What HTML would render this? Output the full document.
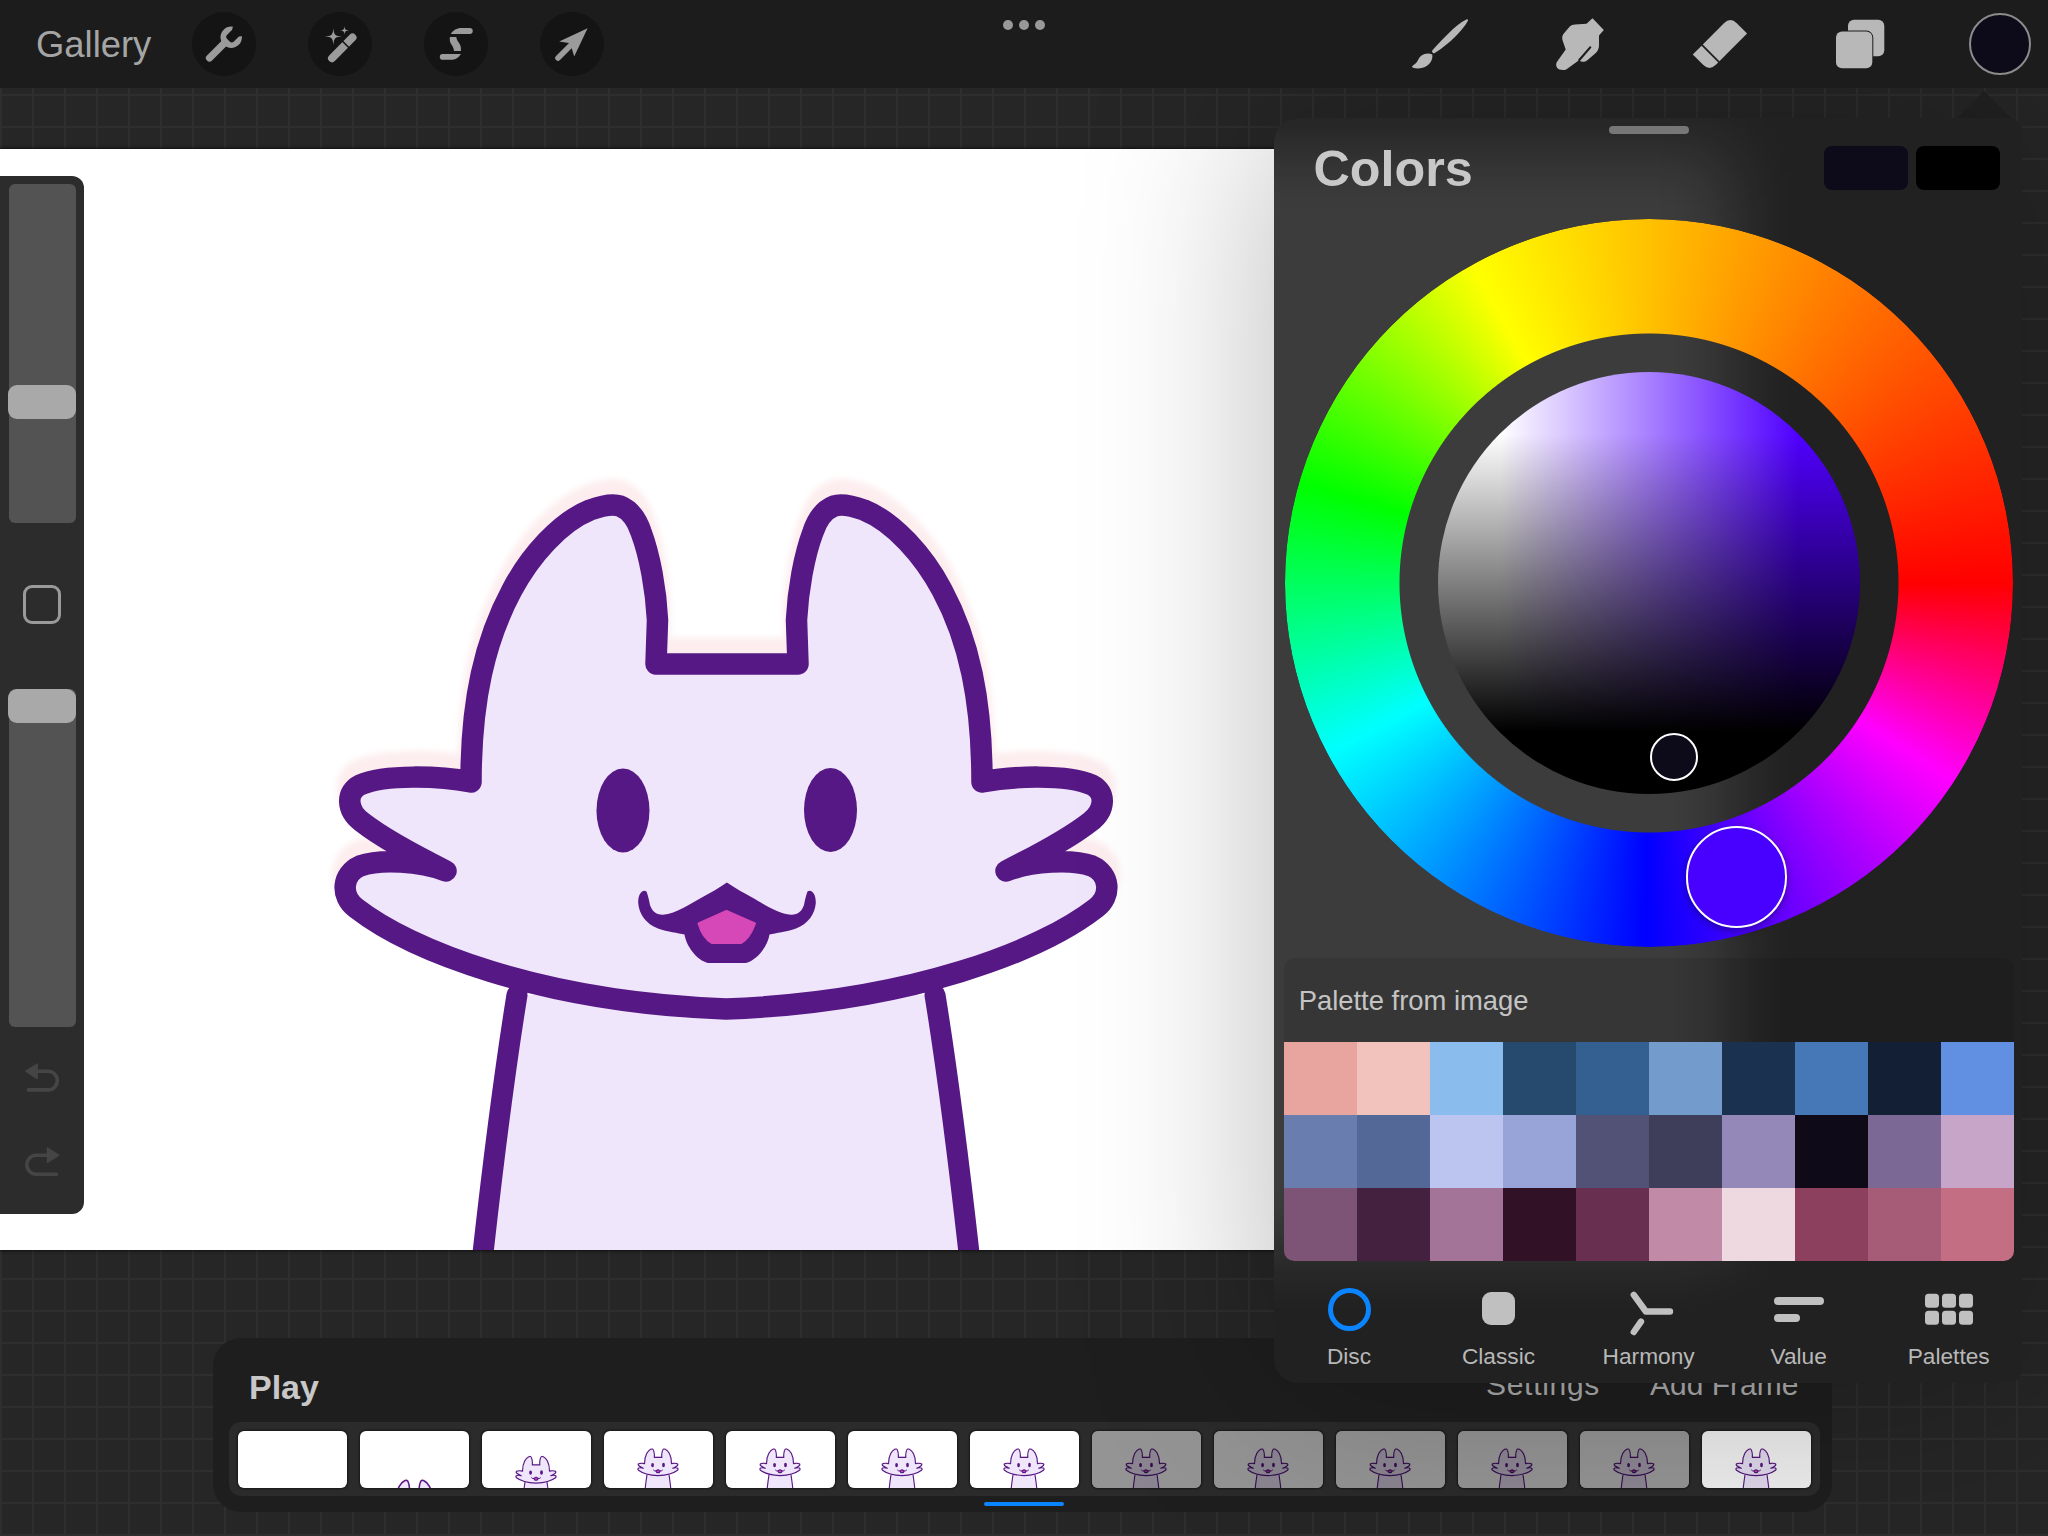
<!DOCTYPE html>
<html><head><meta charset="utf-8">
<style>
*{margin:0;padding:0;box-sizing:border-box}
html,body{width:2048px;height:1536px;overflow:hidden}
body{position:relative;background:#262626;font-family:"Liberation Sans",sans-serif;
background-image:linear-gradient(to right,#2e2e2e 0,#2e2e2e 2px,transparent 2px),linear-gradient(to bottom,#2e2e2e 0,#2e2e2e 2px,transparent 2px);
background-size:32px 32px,32px 32px;background-position:0 0,0 30px}
.abs{position:absolute}
#toolbar{left:0;top:0;width:2048px;height:88px;background:#1c1c1c;z-index:5}
.tbtn{position:absolute;top:12px;width:64px;height:64px;border-radius:50%;background:#141414}
.txt{position:absolute;white-space:nowrap;line-height:1}
#canvas{left:0;top:149px;width:1720px;height:1101px;background:#fff;box-shadow:0 0 3px 1px rgba(0,0,0,.6)}
#canvshade{left:1000px;top:149px;width:274px;height:1101px;background:linear-gradient(to right,rgba(0,0,0,0) 0,rgba(0,0,0,0) 80px,rgba(0,0,0,.05) 170px,rgba(0,0,0,.135) 274px)}
#sidebar{left:-20px;top:176px;width:104px;height:1038px;background:#2c2c2c;border-radius:12px}
#panel{left:1274px;top:118px;width:748px;height:1265px;border-radius:24px 14px 14px 24px;background:#212121;overflow:hidden;box-shadow:0 0 190px rgba(0,0,0,.28)}
#anim{left:213px;top:1338px;width:1619px;height:174px;border-radius:28px;background:rgba(29,29,29,.92)}
</style></head><body>

<div id="toolbar" class="abs">
  <div class="txt" style="left:36px;top:26.5px;font-size:36.4px;color:#a5a5a5">Gallery</div>
  <div class="tbtn" style="left:192px"><svg width="64" height="64">
    <line x1="17.5" y1="46" x2="33" y2="30.5" stroke="#9b9b9b" stroke-width="7.2" stroke-linecap="round"/>
    <circle cx="39.2" cy="25.3" r="10.7" fill="#9b9b9b"/>
    <g transform="translate(38.2,26.5) rotate(-45)" fill="#141414"><rect x="-2.5" y="-4.75" width="12" height="9.5" rx="3"/><circle cx="12" cy="0" r="6.6"/></g>
  </svg></div>
  <div class="tbtn" style="left:308px"><svg width="64" height="64">
    <line x1="24" y1="46.2" x2="44.5" y2="25.5" stroke="#9b9b9b" stroke-width="8" stroke-linecap="round"/>
    <line x1="34" y1="28.8" x2="41" y2="35.8" stroke="#141414" stroke-width="1.6"/>
    <path d="M25.4 15.899999999999999 C25.9 22.799999999999997 27.0 23.9 33.9 24.4 C27.0 24.9 25.9 26.0 25.4 32.9 C24.9 26.0 23.799999999999997 24.9 16.9 24.4 C23.799999999999997 23.9 24.9 22.799999999999997 25.4 15.899999999999999Z" fill="#9b9b9b"/>
    <path d="M36.5 14.3 C36.85 17.6 37.4 18.15 40.7 18.5 C37.4 18.85 36.85 19.4 36.5 22.7 C36.15 19.4 35.6 18.85 32.3 18.5 C35.6 18.15 36.15 17.6 36.5 14.3Z" fill="#9b9b9b"/>
  </svg></div>
  <div class="tbtn" style="left:424px"><svg width="64" height="64">
    <path d="M26.9 21.9 C29 18.3 33 16 37 16 L45.8 16 A2.95 2.95 0 0 1 45.8 21.9 Z" fill="#9b9b9b"/>
    <path d="M25.8 25 L32.3 25 C32.6 29.5 36.9 31.5 36.9 36 L36.9 39 L30 39 C30 34.5 25.8 32 25.8 28 Z" fill="#9b9b9b"/>
    <path d="M36.9 42.1 L18.6 42.1 A2.8 2.8 0 0 0 18.6 47.7 L28.3 47.7 C32 47.7 35 45.5 36.9 42.1 Z" fill="#9b9b9b"/>
  </svg></div>
  <div class="tbtn" style="left:540px"><svg width="64" height="64">
    <line x1="18" y1="46" x2="32" y2="32" stroke="#9b9b9b" stroke-width="5.6" stroke-linecap="round"/>
    <path d="M47.6 16.2 L19.2 29.4 L30.2 31.2 L34.2 44.6 Z" fill="#9b9b9b"/>
  </svg></div>
  <div class="abs" style="left:1003px;top:20px;width:10px;height:10px;border-radius:50%;background:#999"></div>
  <div class="abs" style="left:1019px;top:20px;width:10px;height:10px;border-radius:50%;background:#999"></div>
  <div class="abs" style="left:1035px;top:20px;width:10px;height:10px;border-radius:50%;background:#999"></div>
  <svg class="abs" style="left:1404px;top:12px" width="72" height="64">
    <path d="M28.4 38.2 C38.5 28 50.5 13.5 62.3 7.6 Q64.6 6.6 63.8 8.9 C58.5 18.5 46.5 30.5 30.8 41.1 Q29.2 41.8 28.3 40.3 Q27.8 39.2 28.4 38.2Z" fill="#b8b8b8"/>
    <path d="M28.3 42.6 C25 40.8 20.5 41.5 17.5 43.5 C14.5 45.7 14.2 49 11.8 51.3 C10.4 52.7 8.2 53.6 8 54.8 C8.6 56.5 14.5 57.2 19.5 55.6 C25 53.8 29.2 48.5 28.3 42.6Z" fill="#b8b8b8"/>
  </svg>
  <svg class="abs" style="left:1544px;top:12px" width="72" height="64">
    <path d="M48.5 6.2 L59.8 17.9 L55 23.4 L55 33 C55 36.5 54 39 51.5 41.2 L43 48.4 C41 50.2 37 50.3 35 48.3 L22.2 57.4 C20 58.4 15 58.2 13.3 56 C11.8 54 11.8 51.5 13.2 49.5 L21.7 37.6 L18.6 28.5 C17.8 26 18.2 23.5 19.8 21.5 L25.8 14.5 C27 13 29 12.5 31 12.4 L42.5 11.8 Z" fill="#b8b8b8"/>
    <line x1="35.3" y1="48" x2="46.2" y2="35.4" stroke="#1c1c1c" stroke-width="2.2" stroke-linecap="round"/>
  </svg>
  <svg class="abs" style="left:1684px;top:12px" width="72" height="64">
    <g transform="translate(18.75,32.5) rotate(-45)" fill="#b8b8b8">
      <path d="M0 0 L30 0 Q39.1 0 39.1 9 L39.1 23.6 L0 23.6 Z"/>
      <path d="M-14.1 0 L-1.7 0 L-1.7 23.6 L-5.1 23.6 Q-14.1 23.6 -14.1 14.6 Z"/>
    </g>
  </svg>
  <svg class="abs" style="left:1830px;top:14px" width="60" height="60">
    <rect x="18" y="5.7" width="36.3" height="36.5" rx="6" fill="#b8b8b8"/>
    <rect x="5" y="16.6" width="38.3" height="38.7" rx="7" fill="#1c1c1c"/>
    <rect x="6" y="17.6" width="36.3" height="36.7" rx="6" fill="#b8b8b8"/>
  </svg>
  <div class="abs" style="left:1969px;top:13px;width:62px;height:62px;border-radius:50%;background:#0d0a1a;border:2.5px solid #8c8c8c"></div>
</div>

<div id="canvas" class="abs"></div>
<svg width="0" height="0" style="position:absolute">
  <defs>
    <filter id="hb" x="-10%" y="-10%" width="120%" height="120%"><feGaussianBlur stdDeviation="3"/></filter>
    <g id="cat">
      <path d="M471 782 C471 700 485 640 512 590 C530 556 560 522 590 510 C604 505 614 504 620 506 C630 510 637 520 641 532 C650 556 656 590 657.5 620 L656 664 L798 664 L796.5 620 C798 590 804 556 813 532 C817 520 824 510 834 506 C840 504 850 505 864 510 C894 522 924 556 942 590 C969 640 982 700 982 782 C1012 776 1067 774 1092 785 C1106 792 1106 810 1090 822 C1067 840 1032 858 1006 871 C1032 861 1072 859 1092 866 C1110 874 1112 896 1096 908 C1042 950 912 1002 726 1009 C540 1002 410 950 356 908 C340 896 342 874 360 866 C380 859 420 861 446 871 C420 858 385 840 362 822 C346 810 346 792 360 785 C385 774 440 776 471 782 Z" transform="translate(0,-13)" fill="none" stroke="#fdedee" stroke-width="26" stroke-linejoin="round" opacity="1" filter="url(#hb)"/>
            <path d="M517 995 Q500 1100 482 1262 L970 1262 Q952 1100 935 995 Z" fill="#efe6fb"/>
      <path d="M517 995 Q500 1100 482 1262 M935 995 Q952 1100 970 1262" fill="none" stroke="#561884" stroke-width="21" stroke-linecap="round"/>
      <path d="M471 782 C471 700 485 640 512 590 C530 556 560 522 590 510 C604 505 614 504 620 506 C630 510 637 520 641 532 C650 556 656 590 657.5 620 L656 664 L798 664 L796.5 620 C798 590 804 556 813 532 C817 520 824 510 834 506 C840 504 850 505 864 510 C894 522 924 556 942 590 C969 640 982 700 982 782 C1012 776 1067 774 1092 785 C1106 792 1106 810 1090 822 C1067 840 1032 858 1006 871 C1032 861 1072 859 1092 866 C1110 874 1112 896 1096 908 C1042 950 912 1002 726 1009 C540 1002 410 950 356 908 C340 896 342 874 360 866 C380 859 420 861 446 871 C420 858 385 840 362 822 C346 810 346 792 360 785 C385 774 440 776 471 782 Z" fill="#efe6fb" stroke="#561884" stroke-width="21.5" stroke-linejoin="round"/>
      <ellipse cx="623" cy="810.5" rx="26.5" ry="42" fill="#561884"/>
      <ellipse cx="830.5" cy="810" rx="26.5" ry="42" fill="#561884"/>
      <path d="M726.9 882.5 C735 888 744 893 752.2 897.6 C762 903 778 914 791 914.8 C798 915 802 911 804 905 C805 900 806 895 807.5 891.5 C811 889 816 893 815.8 903 C815 914 808 924 796 928.5 C786 932 776 933 769.5 934.5 C768 945 758 960 745.7 963 L708 963 C696 960 686 945 684.5 934.5 C678 933 668 932 658 928.5 C646 924 639 914 638.2 903 C638 893 643 889 646.5 891.5 C648 895 649 900 650 905 C652 911 656 915 663 914.8 C676 914 692 903 701.8 897.6 C710 893 719 888 726.9 882.5 Z" fill="#561884"/>
      <path d="M726.5 911 L755 923.5 C752 932 747 940 741 943 L712 943 C706 940 701 932 698.5 923.5 Z" fill="#d647b7" stroke="#d647b7" stroke-width="2" stroke-linejoin="round"/>
    </g>
  </defs>
</svg>
<svg class="abs" style="left:0;top:149px" width="1720" height="1101" viewBox="0 149 1720 1101"><use href="#cat"/></svg>
<div id="sidebar" class="abs"></div>
<div class="abs" style="left:9px;top:184px;width:67px;height:339px;border-radius:6px;background:#535353"></div>
<div class="abs" style="left:8px;top:385px;width:68px;height:34px;border-radius:9px;background:#a9a9a9"></div>
<div class="abs" style="left:23px;top:585px;width:38px;height:39px;border-radius:9px;border:3.2px solid #9a9a9a"></div>
<div class="abs" style="left:9px;top:689px;width:67px;height:338px;border-radius:6px;background:#535353"></div>
<div class="abs" style="left:8px;top:689px;width:68px;height:34px;border-radius:9px;background:#a9a9a9"></div>
<svg class="abs" style="left:20px;top:1058px" width="44" height="124">
  <path d="M16 13.2 L28 13.2 A9.35 9.35 0 0 1 28 31.9 L8.3 31.9" fill="none" stroke="#454545" stroke-width="3.6" stroke-linecap="round"/>
  <path d="M5.8 13.2 L17.2 6 L17.2 20.6 Z" fill="#454545" stroke="#454545" stroke-width="1.4" stroke-linejoin="round"/>
  <path d="M28.5 97.2 L16.4 97.2 A9.55 9.55 0 0 0 16.4 116.3 L36.4 116.3" fill="none" stroke="#454545" stroke-width="3.6" stroke-linecap="round"/>
  <path d="M38.7 97.2 L27.5 90 L27.5 104.4 Z" fill="#454545" stroke="#454545" stroke-width="1.4" stroke-linejoin="round"/>
</svg>

<div id="anim" class="abs"></div>
<div class="txt" style="left:249px;top:1370px;font-size:34px;font-weight:bold;color:#c8c8c8">Play</div>
<div class="txt" style="left:1486px;top:1370px;font-size:30px;letter-spacing:0.7px;color:#adadad">Settings</div>
<div class="txt" style="left:1650px;top:1370px;font-size:30px;color:#adadad">Add Frame</div>
<div class="abs" style="left:228.5px;top:1421.5px;width:1591px;height:74.5px;border-radius:12px;background:#2b2b2b"></div>
<div class="abs" style="left:238px;top:1430.5px;width:108.5px;height:57px;border-radius:6px;background:#fff;overflow:hidden;box-shadow:0 0 2px 0.5px rgba(0,0,0,.45)"></div>
<div class="abs" style="left:360px;top:1430.5px;width:108.5px;height:57px;border-radius:6px;background:#fff;overflow:hidden;box-shadow:0 0 2px 0.5px rgba(0,0,0,.45)"><svg width="108.5" height="57"><g transform="scale(0.07002) translate(48.8,200.0)"><use href="#cat"/></g></svg></div>
<div class="abs" style="left:482px;top:1430.5px;width:108.5px;height:57px;border-radius:6px;background:#fff;overflow:hidden;box-shadow:0 0 2px 0.5px rgba(0,0,0,.45)"><svg width="108.5" height="57"><g transform="translate(54,7.5) scale(0.0527) translate(-726,-163.4)"><use href="#cat"/></g></svg></div>
<div class="abs" style="left:604px;top:1430.5px;width:108.5px;height:57px;border-radius:6px;background:#fff;overflow:hidden;box-shadow:0 0 2px 0.5px rgba(0,0,0,.45)"><svg width="108.5" height="57"><g transform="translate(54,0) scale(0.0527) translate(-726,-163.4)"><use href="#cat"/></g></svg></div>
<div class="abs" style="left:726px;top:1430.5px;width:108.5px;height:57px;border-radius:6px;background:#fff;overflow:hidden;box-shadow:0 0 2px 0.5px rgba(0,0,0,.45)"><svg width="108.5" height="57"><g transform="translate(54,0) scale(0.0527) translate(-726,-163.4)"><use href="#cat"/></g></svg></div>
<div class="abs" style="left:848px;top:1430.5px;width:108.5px;height:57px;border-radius:6px;background:#fff;overflow:hidden;box-shadow:0 0 2px 0.5px rgba(0,0,0,.45)"><svg width="108.5" height="57"><g transform="translate(54,0) scale(0.0527) translate(-726,-163.4)"><use href="#cat"/></g></svg></div>
<div class="abs" style="left:970px;top:1430.5px;width:108.5px;height:57px;border-radius:6px;background:#fff;overflow:hidden;box-shadow:0 0 2px 0.5px rgba(0,0,0,.45)"><svg width="108.5" height="57"><g transform="translate(54,0) scale(0.0527) translate(-726,-163.4)"><use href="#cat"/></g></svg></div>
<div class="abs" style="left:1092px;top:1430.5px;width:108.5px;height:57px;border-radius:6px;background:#fff;overflow:hidden;box-shadow:0 0 2px 0.5px rgba(0,0,0,.45)"><svg width="108.5" height="57"><g transform="translate(54,0) scale(0.0527) translate(-726,-163.4)"><use href="#cat"/></g></svg><div class="abs" style="left:0;top:0;width:100%;height:100%;background:rgba(0,0,0,.42)"></div></div>
<div class="abs" style="left:1214px;top:1430.5px;width:108.5px;height:57px;border-radius:6px;background:#fff;overflow:hidden;box-shadow:0 0 2px 0.5px rgba(0,0,0,.45)"><svg width="108.5" height="57"><g transform="translate(54,0) scale(0.0527) translate(-726,-163.4)"><use href="#cat"/></g></svg><div class="abs" style="left:0;top:0;width:100%;height:100%;background:rgba(0,0,0,.42)"></div></div>
<div class="abs" style="left:1336px;top:1430.5px;width:108.5px;height:57px;border-radius:6px;background:#fff;overflow:hidden;box-shadow:0 0 2px 0.5px rgba(0,0,0,.45)"><svg width="108.5" height="57"><g transform="translate(54,0) scale(0.0527) translate(-726,-163.4)"><use href="#cat"/></g></svg><div class="abs" style="left:0;top:0;width:100%;height:100%;background:rgba(0,0,0,.42)"></div></div>
<div class="abs" style="left:1458px;top:1430.5px;width:108.5px;height:57px;border-radius:6px;background:#fff;overflow:hidden;box-shadow:0 0 2px 0.5px rgba(0,0,0,.45)"><svg width="108.5" height="57"><g transform="translate(54,0) scale(0.0527) translate(-726,-163.4)"><use href="#cat"/></g></svg><div class="abs" style="left:0;top:0;width:100%;height:100%;background:rgba(0,0,0,.42)"></div></div>
<div class="abs" style="left:1580px;top:1430.5px;width:108.5px;height:57px;border-radius:6px;background:#fff;overflow:hidden;box-shadow:0 0 2px 0.5px rgba(0,0,0,.45)"><svg width="108.5" height="57"><g transform="translate(54,0) scale(0.0527) translate(-726,-163.4)"><use href="#cat"/></g></svg><div class="abs" style="left:0;top:0;width:100%;height:100%;background:rgba(0,0,0,.42)"></div></div>
<div class="abs" style="left:1702px;top:1430.5px;width:108.5px;height:57px;border-radius:6px;background:#fff;overflow:hidden;box-shadow:0 0 2px 0.5px rgba(0,0,0,.45)"><svg width="108.5" height="57"><g transform="translate(54,0) scale(0.0527) translate(-726,-163.4)"><use href="#cat"/></g></svg><div class="abs" style="left:0;top:0;width:100%;height:100%;background:rgba(0,0,0,.07)"></div></div>

<div class="abs" style="left:983.5px;top:1502px;width:80.5px;height:4px;border-radius:2px;background:#0a84ff"></div>

<svg class="abs" style="left:1954px;top:90px" width="60" height="30"><path d="M30 1 L58 29 L2 29 Z" fill="#212121"/></svg>
<div id="panel" class="abs">
  <div class="abs" style="left:-1594px;top:31px;width:2052px;height:1101px;background:rgba(255,255,255,.125);filter:blur(36px)"></div>
  <div class="abs" style="left:335px;top:8px;width:80px;height:8px;border-radius:4px;background:#777"></div>
  <div class="txt" style="left:39.5px;top:26px;font-size:50.3px;font-weight:bold;color:#c8c8c8">Colors</div>
  <div class="abs" style="left:550px;top:28px;width:84px;height:44px;border-radius:8px;background:#0d0a1a"></div>
  <div class="abs" style="left:642px;top:28px;width:84px;height:44px;border-radius:8px;background:#000"></div>
  <div id="ring" class="abs" style="left:10.7px;top:100.8px;width:728px;height:728px;border-radius:50%;background:conic-gradient(#ffc100 0deg,#ff0000 90deg,#ff00ff 123deg,#0000ff 180.5deg,#00ffff 242deg,#00ff00 286deg,#ffff00 331deg,#ffc100 360deg);-webkit-mask-image:radial-gradient(circle closest-side,transparent 249px,#000 250px);mask-image:radial-gradient(circle closest-side,transparent 249px,#000 250px)"></div>
  <div id="disc" class="abs" style="left:163.7px;top:253.8px;width:422px;height:422px;border-radius:50%;background:linear-gradient(to bottom,rgba(0,0,0,0) 62px,#000 360px),linear-gradient(to right,#fff 62px,#5000ff 360px)"></div>
  <div class="abs" style="left:375.7px;top:614.7px;width:48.6px;height:48.6px;border-radius:50%;border:2px solid #fff;background:#0d0a1a"></div>
  <div class="abs" style="left:411.5px;top:708px;width:101.6px;height:101.6px;border-radius:50%;border:2.5px solid #fff;background:#4800ff;box-shadow:0 3px 8px rgba(0,0,0,.35)"></div>
  <div class="abs" style="left:10px;top:839.5px;width:730px;height:303px;border-radius:10px;background:rgba(0,0,0,.09);overflow:hidden">
    <div class="txt" style="left:14.7px;top:29.5px;font-size:27.4px;color:#c4c4c4">Palette from image</div>
    <div class="abs" style="left:0;top:84.5px;width:730px;height:219px"><div class="abs" style="left:0px;top:0px;width:73px;height:73px;background:#e8a5a0"></div><div class="abs" style="left:73px;top:0px;width:73px;height:73px;background:#f2c3bd"></div><div class="abs" style="left:146px;top:0px;width:73px;height:73px;background:#8bbcee"></div><div class="abs" style="left:219px;top:0px;width:73px;height:73px;background:#264a6e"></div><div class="abs" style="left:292px;top:0px;width:73px;height:73px;background:#335f91"></div><div class="abs" style="left:365px;top:0px;width:73px;height:73px;background:#739ccd"></div><div class="abs" style="left:438px;top:0px;width:73px;height:73px;background:#1a3150"></div><div class="abs" style="left:511px;top:0px;width:73px;height:73px;background:#4678b8"></div><div class="abs" style="left:584px;top:0px;width:73px;height:73px;background:#121f35"></div><div class="abs" style="left:657px;top:0px;width:73px;height:73px;background:#6190e3"></div><div class="abs" style="left:0px;top:73px;width:73px;height:73px;background:#6a7daf"></div><div class="abs" style="left:73px;top:73px;width:73px;height:73px;background:#536897"></div><div class="abs" style="left:146px;top:73px;width:73px;height:73px;background:#bbc5ef"></div><div class="abs" style="left:219px;top:73px;width:73px;height:73px;background:#98a4d7"></div><div class="abs" style="left:292px;top:73px;width:73px;height:73px;background:#525276"></div><div class="abs" style="left:365px;top:73px;width:73px;height:73px;background:#3e3d5a"></div><div class="abs" style="left:438px;top:73px;width:73px;height:73px;background:#9488b8"></div><div class="abs" style="left:511px;top:73px;width:73px;height:73px;background:#0e0a18"></div><div class="abs" style="left:584px;top:73px;width:73px;height:73px;background:#7c6894"></div><div class="abs" style="left:657px;top:73px;width:73px;height:73px;background:#c6a5c8"></div><div class="abs" style="left:0px;top:146px;width:73px;height:73px;background:#7d5475"></div><div class="abs" style="left:73px;top:146px;width:73px;height:73px;background:#44213f"></div><div class="abs" style="left:146px;top:146px;width:73px;height:73px;background:#a37497"></div><div class="abs" style="left:219px;top:146px;width:73px;height:73px;background:#311126"></div><div class="abs" style="left:292px;top:146px;width:73px;height:73px;background:#692f50"></div><div class="abs" style="left:365px;top:146px;width:73px;height:73px;background:#c18aa6"></div><div class="abs" style="left:438px;top:146px;width:73px;height:73px;background:#eed9e1"></div><div class="abs" style="left:511px;top:146px;width:73px;height:73px;background:#8c405d"></div><div class="abs" style="left:584px;top:146px;width:73px;height:73px;background:#a65b76"></div><div class="abs" style="left:657px;top:146px;width:73px;height:73px;background:#c36e82"></div></div>
  </div>
  <div class="abs" style="left:53.5px;top:1169.5px;width:43px;height:43px;border-radius:50%;border:5.6px solid #0a84ff"></div>
  <div class="abs" style="left:207.5px;top:1173.5px;width:33px;height:33px;border-radius:9px;background:#c0c0c0"></div>
  <svg class="abs" style="left:340px;top:1160px" width="60" height="60">
    <path d="M19.8 16.8 L31.9 33.5 L56 33.5 M27 43.7 L19.8 54" fill="none" stroke="#c0c0c0" stroke-width="6.4" stroke-linecap="round" stroke-linejoin="round"/>
  </svg>
  <div class="abs" style="left:500px;top:1178.7px;width:50.2px;height:8.7px;border-radius:4.4px;background:#c0c0c0"></div>
  <div class="abs" style="left:500px;top:1195.5px;width:26.2px;height:8.7px;border-radius:4.4px;background:#c0c0c0"></div>
  <svg class="abs" style="left:650px;top:1175px" width="50" height="32" fill="#c0c0c0">
    <rect x="1" y="0.7" width="14" height="14" rx="3.5"/><rect x="18" y="0.7" width="14" height="14" rx="3.5"/><rect x="35" y="0.7" width="14" height="14" rx="3.5"/>
    <rect x="1" y="17.7" width="14" height="14" rx="3.5"/><rect x="18" y="17.7" width="14" height="14" rx="3.5"/><rect x="35" y="17.7" width="14" height="14" rx="3.5"/>
  </svg>
  <div class="txt" style="left:75px;top:1227px;width:0;font-size:22.7px;color:#b8b8b8"><span style="position:absolute;transform:translateX(-50%)">Disc</span></div>
  <div class="txt" style="left:224.5px;top:1227px;width:0;font-size:22.7px;color:#b8b8b8"><span style="position:absolute;transform:translateX(-50%)">Classic</span></div>
  <div class="txt" style="left:374.6px;top:1227px;width:0;font-size:22.7px;color:#b8b8b8"><span style="position:absolute;transform:translateX(-50%)">Harmony</span></div>
  <div class="txt" style="left:524.7px;top:1227px;width:0;font-size:22.7px;color:#b8b8b8"><span style="position:absolute;transform:translateX(-50%)">Value</span></div>
  <div class="txt" style="left:674.7px;top:1227px;width:0;font-size:22.7px;color:#b8b8b8"><span style="position:absolute;transform:translateX(-50%)">Palettes</span></div>
</div>

</body></html>
